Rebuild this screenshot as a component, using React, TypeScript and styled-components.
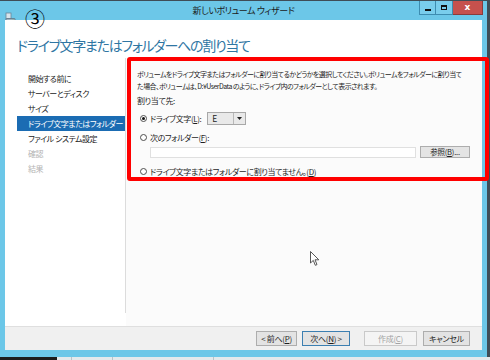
import React from "react";
import styled, { createGlobalStyle } from "styled-components";

const GlobalStyle = createGlobalStyle`
  html, body {
    margin: 0;
    padding: 0;
  }
  body {
    width: 490px;
    height: 360px;
    overflow: hidden;
    background: #3f4d57;
    font-family: "Noto Sans CJK JP", "Noto Sans", sans-serif;
    font-feature-settings: "palt";
    color: #1a1a1a;
  }
`;

const navItems = [
  { label: "開始する前に" },
  { label: "サーバーとディスク" },
  { label: "サイズ" },
  { label: "ドライブ文字またはフォルダー", active: true },
  { label: "ファイル システム設定" },
  { label: "確認", disabled: true },
  { label: "結果", disabled: true },
];

const DriveIcon = () => (
  <svg width="11" height="11" viewBox="0 0 11 11">
    <rect x="1" y="1" width="5" height="6" fill="#d8e4ec" stroke="#6a8699" strokeWidth="0.8" />
    <rect x="1" y="6.5" width="9" height="3.5" rx="0.5" fill="#9fb3c2" stroke="#5c7587" strokeWidth="0.8" />
    <rect x="7.5" y="7.8" width="1.3" height="1" fill="#3ec43e" />
  </svg>
);

const Cursor = () => (
  <svg width="10" height="16" viewBox="0 0 10 16">
    <path
      d="M0.5 0.5 L0.5 12 L3.3 9.4 L5.3 14.3 L7 13.6 L5 8.8 L8.8 8.8 Z"
      fill="#ffffff"
      stroke="#444"
      strokeWidth="0.9"
      strokeLinejoin="round"
    />
  </svg>
);

const App = () => {
  return (
    <Page>
      <GlobalStyle />
      <Window>
        <TitleBar>
          <TitleLeft>
            <DriveIcon />
          </TitleLeft>
          <TitleText>新しいボリューム ウィザード</TitleText>
          <Controls>
            <CtrlButton>
              <MinGlyph />
            </CtrlButton>
            <CtrlButton>
              <MaxGlyph />
            </CtrlButton>
            <CloseButton>x</CloseButton>
          </Controls>
        </TitleBar>
        <Client>
          <Header>ドライブ文字またはフォルダーへの割り当て</Header>
          <Body>
            <Nav>
              <NavList>
                {navItems.map((item) => (
                  <NavItem key={item.label} $active={item.active} $disabled={item.disabled}>
                    {item.label}
                  </NavItem>
                ))}
              </NavList>
              <NavFoot />
            </Nav>
            <Content>
              <Description>
                ボリュームをドライブ文字またはフォルダーに割り当てるかどうかを選択してください。ボリュームをフォルダーに割り当て
                <br />
                た場合、ボリュームは、D:¥UserData のように、ドライブ内のフォルダーとして表示されます。
              </Description>
              <Label>割り当て先:</Label>
              <RadioRow>
                <Radio $checked />
                <RadioText>
                  ドライブ文字(<U>L</U>):
                </RadioText>
                <Select>
                  <SelectValue>E</SelectValue>
                  <SelectArrow>
                    <svg width="5" height="3" viewBox="0 0 5 3">
                      <path d="M0 0 L5 0 L2.5 3 Z" fill="#222" />
                    </svg>
                  </SelectArrow>
                </Select>
              </RadioRow>
              <RadioRow $top={5}>
                <Radio />
                <RadioText>
                  次のフォルダー(<U>F</U>):
                </RadioText>
              </RadioRow>
              <FolderRow>
                <FolderInput />
                <SmallButton>
                  参照(<U>B</U>)...
                </SmallButton>
              </FolderRow>
              <RadioRow $top={6}>
                <Radio />
                <RadioText>
                  ドライブ文字またはフォルダーに割り当てません。(<U>D</U>)
                </RadioText>
              </RadioRow>
            </Content>
          </Body>
          <Footer>
            <FooterButton $width={41}>
              &lt; 前へ(<U>P</U>)
            </FooterButton>
            <FooterButton $width={48} $default $gap={5}>
              次へ(<U>N</U>) &gt;
            </FooterButton>
            <FooterButton $width={53} $disabled $gap={14}>
              作成(<U>C</U>)
            </FooterButton>
            <FooterButton $width={47} $gap={6}>
              キャンセル
            </FooterButton>
          </Footer>
        </Client>
      </Window>
      <Taskbar>
        <TaskDark />
        <TaskSlot $width={14} />
        <TaskSlot $width={40} />
        <TaskSlot $width={100} />
      </Taskbar>
      <StepMark>③</StepMark>
      <Highlight />
      <PointerWrap>
        <Cursor />
      </PointerWrap>
    </Page>
  );
};

export default App;

const Page = styled.div`
  position: relative;
  width: 490px;
  height: 360px;
  padding-top: 1px;
  box-sizing: border-box;
  display: flex;
  flex-direction: column;
`;

const Window = styled.div`
  width: 487px;
  height: 356px;
  background: #6cc7e8;
  display: flex;
  flex-direction: column;
  box-sizing: border-box;
`;

const TitleBar = styled.div`
  height: 19px;
  display: grid;
  grid-template-columns: 1fr auto 1fr;
  align-items: start;
`;

const TitleLeft = styled.div`
  padding: 3px 0 0 5px;
`;

const TitleText = styled.div`
  font-size: 9px;
  letter-spacing: -0.4px;
  line-height: 19px;
  color: #1b1b1b;
  white-space: nowrap;
`;

const Controls = styled.div`
  display: flex;
  justify-content: flex-end;
  padding-right: 4px;
`;

const CtrlButton = styled.div`
  width: 17px;
  height: 14px;
  box-sizing: border-box;
  border: 1px solid #3d8cb0;
  border-top: none;
  background: #79cdec;
  display: flex;
  align-items: center;
  justify-content: center;
  & + & {
    border-left: none;
  }
`;

const MinGlyph = styled.div`
  width: 6px;
  height: 2px;
  margin-top: 4px;
  background: #111;
`;

const MaxGlyph = styled.div`
  width: 6px;
  height: 5px;
  box-sizing: border-box;
  border: 1px solid #111;
  border-top-width: 2px;
`;

const CloseButton = styled.div`
  width: 30px;
  height: 14px;
  box-sizing: border-box;
  border: 1px solid #8a3b3b;
  border-top: none;
  border-left: none;
  background: #c6514d;
  color: #fff;
  font-family: "DejaVu Sans", sans-serif;
  font-weight: bold;
  font-size: 9px;
  line-height: 12px;
  text-align: center;
`;

const Client = styled.div`
  margin: 0 5px 7px;
  height: 330px;
  background: #ffffff;
  display: flex;
  flex-direction: column;
`;

const Header = styled.div`
  height: 38px;
  padding-left: 12px;
  font-size: 14px;
  letter-spacing: -1.3px;
  line-height: 50px;
  color: #2f76a3;
  white-space: nowrap;
  box-sizing: border-box;
`;

const Body = styled.div`
  height: 268px;
  display: flex;
`;

const Nav = styled.div`
  width: 121px;
  display: flex;
  flex-direction: column;
  background: #ffffff;
`;

const NavList = styled.div`
  flex: 1;
  border-right: 1px solid #dcdcdc;
  padding-top: 13px;
`;

const NavFoot = styled.div`
  height: 13px;
`;

const NavItem = styled.div<{ $active?: boolean; $disabled?: boolean }>`
  height: 15px;
  margin-left: 12px;
  padding-left: 11px;
  font-size: 8px;
  letter-spacing: -0.5px;
  line-height: 15px;
  white-space: nowrap;
  background: ${(p) => (p.$active ? "#1b6cb3" : "transparent")};
  color: ${(p) => (p.$active ? "#ffffff" : p.$disabled ? "#b4b4b4" : "#222222")};
`;

const Content = styled.div`
  flex: 1;
  background: #fbfbfb;
  padding: 10px 0 0 11px;
  font-size: 8px;
  letter-spacing: -0.4px;
  color: #1e1e1e;
`;

const Description = styled.div`
  line-height: 12px;
  font-size: 7px;
  letter-spacing: -0.55px;
  white-space: nowrap;
`;

const Label = styled.div`
  margin-top: 3px;
  line-height: 12px;
`;

const RadioRow = styled.div<{ $top?: number }>`
  display: flex;
  align-items: center;
  height: 14px;
  margin-top: ${(p) => p.$top ?? 4}px;
  padding-left: 3px;
`;

const Radio = styled.span<{ $checked?: boolean }>`
  width: 7px;
  height: 7px;
  box-sizing: border-box;
  border-radius: 50%;
  border: 1px solid #4d4d4d;
  background: #fff;
  position: relative;
  flex: none;
  &::after {
    content: "";
    display: ${(p) => (p.$checked ? "block" : "none")};
    position: absolute;
    left: 1px;
    top: 1px;
    width: 3px;
    height: 3px;
    border-radius: 50%;
    background: #111;
  }
`;

const RadioText = styled.span`
  margin-left: 3px;
  white-space: nowrap;
`;

const U = styled.span`
  text-decoration: underline;
`;

const Select = styled.div`
  margin-left: 6px;
  width: 39px;
  height: 13px;
  box-sizing: border-box;
  border: 1px solid #a8a8a8;
  background: #e9e9e9;
  display: flex;
`;

const SelectValue = styled.div`
  flex: 1;
  padding-left: 4px;
  line-height: 11px;
  font-size: 8.5px;
`;

const SelectArrow = styled.div`
  width: 11px;
  border-left: 1px solid #b8b8b8;
  display: flex;
  align-items: center;
  justify-content: center;
`;

const FolderRow = styled.div`
  display: flex;
  align-items: center;
  margin-top: 2px;
  padding-left: 13px;
`;

const FolderInput = styled.div`
  width: 266px;
  height: 11px;
  box-sizing: border-box;
  border: 1px solid #e0e0e0;
  background: #ffffff;
`;

const SmallButton = styled.div`
  margin-left: 4px;
  width: 50px;
  height: 12px;
  box-sizing: border-box;
  border: 1px solid #adadad;
  background: #e4e4e4;
  font-size: 7.5px;
  letter-spacing: -0.2px;
  line-height: 10px;
  text-align: center;
  white-space: nowrap;
`;

const Footer = styled.div`
  height: 24px;
  box-sizing: border-box;
  border-top: 1px solid #dfdfdf;
  background: #f0f0f0;
  display: flex;
  align-items: center;
  justify-content: flex-end;
  padding: 0 12px 0 0;
`;

const FooterButton = styled.div<{
  $width: number;
  $gap?: number;
  $default?: boolean;
  $disabled?: boolean;
}>`
  width: ${(p) => p.$width}px;
  margin-left: ${(p) => p.$gap ?? 0}px;
  height: 15px;
  box-sizing: border-box;
  border: 1px solid ${(p) => (p.$default ? "#3c7fb1" : p.$disabled ? "#c9c9c9" : "#adadad")};
  background: ${(p) => (p.$disabled ? "#f4f4f4" : "#e3e3e3")};
  color: ${(p) => (p.$disabled ? "#a3a3a3" : "#1e1e1e")};
  font-size: 8px;
  letter-spacing: -0.3px;
  line-height: 13px;
  text-align: center;
  white-space: nowrap;
`;

const Taskbar = styled.div`
  height: 3px;
  display: flex;
  background: #e3e9ec;
`;

const TaskDark = styled.div`
  width: 57px;
  background: #1c1c1c;
`;

const TaskSlot = styled.div<{ $width: number }>`
  width: ${(p) => p.$width}px;
  border-right: 1px solid #b9c3c8;
`;

const StepMark = styled.div`
  position: absolute;
  left: 25px;
  top: 7px;
  font-size: 20px;
  line-height: 24px;
  color: #000;
`;

const Highlight = styled.div`
  position: absolute;
  left: 127px;
  top: 57px;
  width: 362px;
  height: 124px;
  box-sizing: border-box;
  border: 4px solid #ff0000;
  border-radius: 3px;
`;

const PointerWrap = styled.div`
  position: absolute;
  left: 310px;
  top: 251px;
  line-height: 0;
`;
